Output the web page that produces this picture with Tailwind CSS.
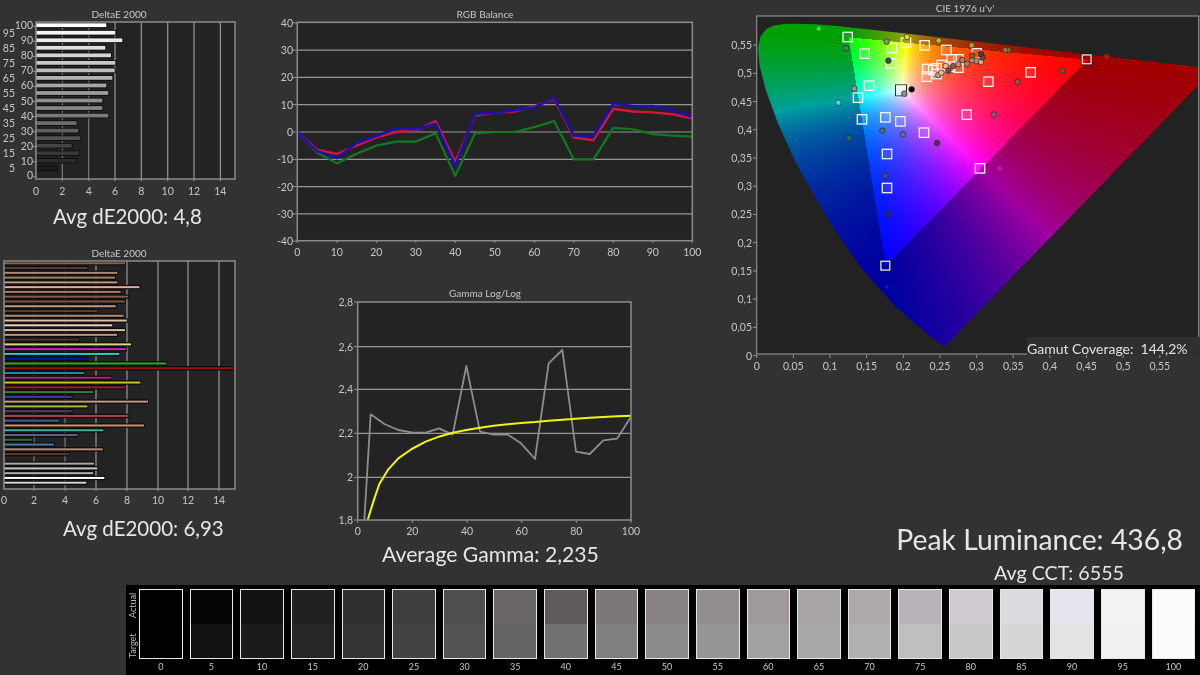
<!DOCTYPE html>
<html lang="en">
<head>
<meta charset="UTF-8">
<title>Calibration report</title>
<script src="https://cdn.jsdelivr.net/npm/@tailwindcss/browser@4"></script>
</head>
<body class="bg-[#323232] font-['Lato',sans-serif] w-[1200px] h-[675px] overflow-hidden flex flex-col text-[#e6e6e6]">

  <div class="flex h-[585px] blur-[0.4px]">
    <!-- left column: deltaE bars -->
    <div class="w-[275px] flex flex-col">
      <svg id="grey" class="block" width="275" height="204" viewBox="0 0 275 204"></svg>
      <p class="pl-[53px] h-[24px] leading-[24px] text-[20.5px] whitespace-nowrap">Avg dE2000: 4,8</p>
      <svg id="colors" class="block mt-[17px]" width="275" height="265" viewBox="0 245 275 265"></svg>
      <p class="pl-[63px] h-[36px] leading-[36px] text-[20.5px] whitespace-nowrap">Avg dE2000: 6,93</p>
    </div>

    <!-- middle column: rgb balance and gamma -->
    <div class="w-[445px] flex flex-col">
      <svg id="rgb" class="block" width="445" height="262" viewBox="275 0 445 262"></svg>
      <svg id="gamma" class="block mt-[22px]" width="445" height="257" viewBox="275 284 445 257"></svg>
      <p class="pl-[107px] h-[26px] leading-[26px] text-[21.2px] whitespace-nowrap">Average Gamma: 2,235</p>
    </div>

    <!-- right column: cie chart and peak figures -->
    <div class="w-[480px] flex flex-col">
      <div class="relative h-[372px]">
        <canvas id="gamut" class="absolute left-[37px] top-[16px]" width="441" height="338"></canvas>
        <svg id="cie" class="absolute left-0 top-0" width="480" height="372" viewBox="720 0 480 372"></svg>
      </div>
      <div class="mt-auto flex flex-col items-end">
        <p class="pr-[17px] h-[40px] leading-[40px] text-[28.3px] whitespace-nowrap">Peak Luminance: 436,8</p>
        <p class="pr-[76px] mt-[2px] h-[24px] leading-[24px] text-[19.7px] whitespace-nowrap">Avg CCT: 6555</p>
      </div>
    </div>
  </div>

  <!-- grayscale strip -->
  <div class="ml-[126px] h-[90px] bg-black flex pt-[4px] pr-[5px] blur-[0.4px]">
    <div class="w-[13px] h-[73px] flex flex-col items-center justify-between text-[9px] leading-[13px] text-[#bbbbbb]">
      <span class="[writing-mode:vertical-rl] rotate-180 h-[32px] text-center">Actual</span>
      <span class="[writing-mode:vertical-rl] rotate-180 h-[32px] text-center">Target</span>
    </div>
    <div id="swatches" class="flex-1 flex gap-[7px]"></div>
  </div>

<script>
  const GRID = '#969696', FRAME = '#8c8c8c', LABEL = '#c6c6c6', PLOT = '#232323';

  function rect(x, y, w, h, fill, extra = '') {
    return `<rect x="${x}" y="${y}" width="${w}" height="${h}" fill="${fill}" ${extra}/>`;
  }
  function line(x1, y1, x2, y2, color = GRID, width = 1.2) {
    return `<line x1="${x1}" y1="${y1}" x2="${x2}" y2="${y2}" stroke="${color}" stroke-width="${width}"/>`;
  }
  function text(x, y, str, anchor = 'middle', size = 10.5, color = LABEL) {
    return `<text x="${x}" y="${y}" text-anchor="${anchor}" dominant-baseline="central" font-size="${size}" fill="${color}">${str}</text>`;
  }
  function poly(points, color, width) {
    const p = points.map(a => a.join(',')).join(' ');
    return `<polyline points="${p}" fill="none" stroke="${color}" stroke-width="${width}" stroke-linejoin="round"/>`;
  }
  function frame(x1, y1, x2, y2) {
    return `<rect x="${x1}" y="${y1}" width="${x2 - x1}" height="${y2 - y1}" fill="none" stroke="${FRAME}" stroke-width="1.5"/>`;
  }

  // grayscale deltaE
  (function () {
    const ends = [322,349,370,319,336,349,347,340,322,328,310,310,328,233,238,244,218,241,233,173];
    let s = text(119, 14, 'DeltaE 2000', 'middle', 10);
    s += rect(36, 22, 199, 157, PLOT);
    for (let v = 2; v <= 14; v += 2) {
      const x = 36 + v * 13.17;
      s += line(x, 22, x, 181, v <= 4 ? '#7a7a7a' : GRID);
      s += text(x, 191, v);
    }
    s += text(36, 191, 0);
    ends.forEach((e, i) => {
      const y = 25.2 + i * 7.53, g = Math.round(255 * Math.pow(1 - i / 20.5, 0.85));
      s += rect(36, y - 2.8, e / 3 - 36, 5.6, '#0c0c0c');
      s += rect(36, y - 1.9, e / 3 - 37, 3.8, `rgb(${g},${g},${g})`);
    });
    for (let i = 0; i <= 20; i++) {
      const y = 25.2 + i * 7.53, v = 100 - i * 5;
      s += text(i % 2 ? 15 : 33, y + (i === 20 ? -0.5 : 0), v, 'end');
      if (i % 2 === 0) s += line(33, y + 1, 36, y + 1, GRID, 1);
    }
    s += frame(36, 22, 235, 179);
    document.getElementById('grey').innerHTML = s;
  })();

  // colour deltaE
  (function () {
    const bars = [
      [378,'#8a6250'],[265,'#5a3e30'],[355,'#b08a70'],[348,'#a58068'],[355,'#b89880'],[421,'#e8a898'],[365,'#a87868'],[387,'#8a5a48'],
      [378,'#7a5544'],[350,'#c09a85'],[295,'#5a4030'],[374,'#b88a68'],[383,'#e0c0a8'],[340,'#e8d4c4'],[378,'#dcb8a0'],[354,'#bb9580'],
      [240,'#4a3a30'],[396,'#d8d88a'],[381,'#d020d0'],[361,'#30c8c8'],[265,'#1018a0'],[502,'#20b020'],[704,'#a01010'],[255,'#1090a8'],
      [337,'#a02a70'],[424,'#c8c820'],[378,'#902030'],[283,'#3a7a3a'],[218,'#3a40a0'],[447,'#c89878'],[265,'#a0c040'],[218,'#5a3a6a'],
      [388,'#b04050'],[180,'#4a5a9a'],[435,'#d89060'],[313,'#40b098'],[235,'#606088'],[100,'#3a6a28'],[165,'#4a78a8'],[311,'#b88a78'],
      [210,'#5a3a30'],null,[285,'#a8a8a8'],[295,'#c8c8c8'],[282,'#b0b0b0'],[316,'#ffffff'],[262,'#d0d0d0']
    ];
    const tick = [4, 34, 65, 96, 127, 158, 188, 219];
    let s = text(119, 253, 'DeltaE 2000', 'middle', 10);
    s += rect(4, 261, 231, 228, PLOT);
    tick.forEach((x, i) => {
      if (i) s += line(x, 261, x, 491, i < 3 ? '#7a7a7a' : GRID);
      s += text(x, 500, i * 2);
    });
    bars.forEach((b, i) => {
      if (!b) return;
      const y = 263.3 + i * 4.77;
      s += rect(4, y - 2.2, b[0] / 3 - 4, 4.4, '#0c0c0c');
      s += rect(4, y - 1, b[0] / 3 - 5, 2, b[1]);
    });
    s += frame(4, 261, 235, 489);
    document.getElementById('colors').innerHTML = s;
  })();

  // rgb balance
  (function () {
    const red = [0,-6.5,-8,-5,-2,0,0.5,4,-11,6,7,7.5,9.5,12,-2,-3,8.5,7.5,7.2,6.5,5];
    const green = [0,-7.5,-11.5,-8,-5,-3.5,-3.5,-0.5,-16,-0.5,0,0,1.8,4,-10,-10,1.5,1,-0.8,-1.3,-1.7];
    const blue = [0,-7,-9.5,-4,-1.5,1.3,1,3,-12.5,6.7,7,8,9,12.5,-1.3,-1.5,10.5,9.5,9.5,8,5.5];
    const X = i => 297.3 + i * 19.75, Y = v => 132 - v * 2.73;
    const pts = a => a.map((v, i) => [X(i), Y(v)]);
    let s = text(485, 14, 'RGB Balance', 'middle', 10);
    s += rect(297.3, 22.3, 395, 218.4, PLOT);
    for (let v = 40; v >= -40; v -= 10) {
      if (Math.abs(v) < 40) s += line(297.3, Y(v), 692.3, Y(v));
      s += text(293, Y(v), v, 'end');
      s += line(293, Y(v), 297, Y(v), GRID, 1);
    }
    for (let i = 0; i <= 10; i++) {
      s += text(X(i * 2), 252, i * 10);
      s += line(X(i * 2), 240, X(i * 2), 243, GRID, 1);
    }
    s += poly(pts(green), '#12791f', 2.2);
    s += poly(pts(red), '#d3173a', 2.4);
    s += poly(pts(blue), '#1c10ae', 2.6);
    s += frame(297.3, 22.3, 692.3, 240.7);
    document.getElementById('rgb').innerHTML = s;
  })();

  // gamma log/log
  (function () {
    const conv = a => a.map(p => [p[0] / 3 + 330, p[1] / 3 + 280]);
    const grey = [[103,720],[122,403],[163,432],[205,450],[245,457],[287,458],[327,445],[368,464],[409,258],[450,455],[491,464],[532,463],[573,490],[615,537],[656,250],[697,210],[738,515],[779,522],[820,481],[861,476],[903,410]];
    const yellow = [[113,720],[130,665],[148,612],[175,568],[205,535],[245,507],[287,485],[327,470],[368,458],[409,450],[450,443],[491,437],[532,433],[573,429],[615,426],[656,422],[697,419],[738,416],[779,413],[820,411],[861,409],[903,407]];
    let s = text(485, 293, 'Gamma Log/Log', 'middle', 10);
    s += rect(357.7, 302, 273.3, 218, PLOT);
    [[302,'2,8'],[346.7,'2,6'],[389.3,'2,4'],[433.3,'2,2'],[477.3,'2'],[520,'1,8']].forEach(g => {
      if (g[0] > 302 && g[0] < 520) s += line(357.7, g[0], 631, g[0]);
      s += text(353, g[0], g[1], 'end');
      s += line(354, g[0], 358, g[0], GRID, 1);
    });
    for (let i = 0; i <= 5; i++) {
      const x = 357.7 + i * 54.66;
      s += text(x, 531, i * 20);
      s += line(x, 520, x, 523, GRID, 1);
    }
    s += poly(conv(grey), '#8e8e8e', 1.8);
    s += poly(conv(yellow), '#f4f40c', 2);
    s += frame(357.7, 302, 631, 520);
    document.getElementById('gamma').innerHTML = s;
  })();

  // cie 1976 chart
  const LOCUS = [[.1741,.005],[.1714,.0051],[.1644,.0109],[.1566,.0177],[.144,.0297],[.1241,.0578],[.1096,.0868],[.0913,.1327],[.0687,.2007],[.0454,.295],[.0235,.4127],[.0082,.5384],[.0039,.6548],[.0139,.7502],[.0389,.812],[.0743,.8338],[.1142,.8262],[.1547,.8059],[.2296,.7543],[.3016,.6923],[.3731,.6245],[.4441,.5547],[.5125,.4866],[.5752,.4242],[.627,.3725],[.6915,.3083],[.719,.2809],[.7347,.2653]]
    .map(p => {
      const d = -2 * p[0] + 12 * p[1] + 3;
      return [4 * p[0] / d, 9 * p[1] / d];
    });

  (function () {
    const cv = document.getElementById('gamut'), ctx = cv.getContext('2d');
    const W = cv.width, H = cv.height;
    const off = document.createElement('canvas');
    off.width = W; off.height = H;
    const octx = off.getContext('2d'), img = octx.createImageData(W, H);
    // canvas px <-> u'v'
    const PX = 733.3, PY = 564.7, BOTTOM = 339;
    for (let y = 0; y < H; y++) {
      for (let x = 0; x < W; x++) {
        const u = (x + 0.5) / PX, v = (BOTTOM - y - 0.5) / PY;
        const i = (y * W + x) * 4;
        if (v <= 0.001) continue;
        const X = 9 * u / (4 * v), Z = (12 - 3 * u - 20 * v) / (4 * v);
        let r = 3.2406 * X - 1.5372 - 0.4986 * Z;
        let g = -0.9689 * X + 1.8758 + 0.0415 * Z;
        let b = 0.0557 * X - 0.204 + 1.057 * Z;
        const inside = r >= 0 && g >= 0 && b >= 0;
        r = Math.max(r, 0); g = Math.max(g, 0); b = Math.max(b, 0);
        const m = Math.max(r, g, b) || 1, k = inside ? 255 : 160, e = 1.1;
        img.data[i] = k * Math.pow(r / m, e);
        img.data[i + 1] = k * Math.pow(g / m, e);
        img.data[i + 2] = k * Math.pow(b / m, e);
        img.data[i + 3] = 255;
      }
    }
    octx.putImageData(img, 0, 0);
    ctx.fillStyle = '#222222';
    ctx.fillRect(0, 0, W, H);
    ctx.beginPath();
    LOCUS.forEach((p, i) => {
      const x = p[0] * PX, y = BOTTOM - p[1] * PY;
      i ? ctx.lineTo(x, y) : ctx.moveTo(x, y);
    });
    ctx.closePath();
    ctx.clip();
    ctx.drawImage(off, 0, 0);
  })();

  (function () {
    const zx = z => 720 + z / 3, zy = z => z / 3;
    const labels = ['0','0,05','0,1','0,15','0,2','0,25','0,3','0,35','0,4','0,45','0,5','0,55'];
    let s = text(965, 8, "CIE 1976 u'v'", 'middle', 10);

    const squares = [[383,111],[434,161],[516,144],[558,128],[614,136],[679,150],[513,190],[447,257],[414,293],[426,358],[496,352],[541,364],[612,398],[740,344],[805,245],[932,217],[501,462],[501,564],[780,505],[622,207],[620,230],[650,205],[665,195],[695,178],[715,178],[715,203],[690,200],[770,160],[650,222],[640,210]];
    squares.forEach(p => {
      s += `<rect x="${zx(p[0]) - 4.7}" y="${zy(p[1]) - 4.7}" width="9.4" height="9.4" fill="#ffffff" fill-opacity="0.08" stroke="#f4f4f4" stroke-width="1.3"/>`;
    });
    // dark edged squares: red, blue and white primaries
    [[1100,178],[496,797],[543,271]].forEach(p => {
      s += `<rect x="${zx(p[0]) - 5.4}" y="${zy(p[1]) - 5.4}" width="10.8" height="10.8" fill="none" stroke="#1a1a1a" stroke-width="1"/>`;
      s += `<rect x="${zx(p[0]) - 4.4}" y="${zy(p[1]) - 4.4}" width="8.8" height="8.8" fill="none" stroke="#f4f4f4" stroke-width="1.2"/>`;
    });

    const dots = [[378,145,'#4a8a50'],[500,125,'#8a9a60'],[561,111,'#e8d820'],[656,122,'#d8b030'],[755,136,'#c09040'],[864,150,'#a87040'],[856,150,'#a06840'],[1160,170,'#d01010'],[505,182,'#3a5a20'],[1027,212,'#a04030'],[893,246,'#a04a40'],[403,266,'#8aa090'],[355,308,'#30e0e0'],[575,268,'#000000'],[553,281,'#909090'],[822,344,'#a04a80'],[487,392,'#4a6a8a'],[549,403,'#6a6a9a'],[651,429,'#503060'],[387,414,'#207070'],[496,527,'#3a4a8a'],[505,642,'#202a70'],[655,225,'#d0a080'],[664,218,'#e8b898'],[677,198,'#e8b898'],[685,212,'#705040'],[700,198,'#806040'],[715,193,'#c09070'],[727,180,'#b08060'],[741,192,'#b08060'],[757,180,'#c09070'],[770,183,'#c08a60'],[783,186,'#e0a880'],[757,167,'#8a5a3a'],[788,172,'#704a30'],[783,162,'#5a3a2a']];
    dots.forEach(d => {
      s += `<circle cx="${zx(d[0])}" cy="${zy(d[1])}" r="2.8" fill="${d[2]}" stroke="#2a2a2a" stroke-opacity="0.8" stroke-width="0.9"/>`;
    });
    s += `<circle cx="${zx(296)}" cy="${zy(86)}" r="2.2" fill="#35e035"/>`;
    s += `<circle cx="${zx(839)}" cy="${zy(505)}" r="2.2" fill="#c814b8"/>`;
    s += `<circle cx="${zx(501)}" cy="${zy(861)}" r="1.6" fill="#1428c8"/>`;

    s += `<rect x="756.7" y="16" width="442" height="338" fill="none" stroke="${FRAME}" stroke-width="1.2"/>`;
    // gamut label sits on its own patch over the corner
    s += rect(1027, 337, 173, 18.5, '#2f2f2f');
    s += `<text x="1027" y="348" dominant-baseline="central" font-size="14" fill="#e2e2e2" xml:space="preserve">Gamut Coverage:  144,2%</text>`;

    labels.forEach((l, i) => {
      const x = 756.7 + i * 36.65, y = 355.6 - i * 28.23;
      s += text(x, 366, l);
      s += line(x, 355, x, 358, GRID, 1);
      s += text(752, y, l, 'end');
      s += line(753, y, 757, y, GRID, 1);
    });
    document.getElementById('cie').innerHTML = s;
  })();

  // grayscale swatches: actual over target
  const swatches = [
    [0,'#000000','#000000'],[5,'#050505','#111111'],[10,'#121212','#1b1b1b'],[15,'#212123','#262626'],[20,'#303033','#343434'],
    [25,'#3f3f42','#434343'],[30,'#4f4f51','#535353'],[35,'#686468','#646464'],[40,'#5d595d','#727272'],[45,'#7a767a','#7f7f7f'],
    [50,'#878285','#8b8b8b'],[55,'#918d91','#969696'],[60,'#9d999d','#a1a1a1'],[65,'#aaa5a9','#a9a9a9'],[70,'#aca8ac','#b1b1b1'],
    [75,'#b8b4b9','#bfbfbf'],[80,'#cfcbd0','#c9c9c9'],[85,'#dddbdf','#d6d6d6'],[90,'#e8e4ee','#e3e3e3'],[95,'#f5f2f6','#f0f0f0'],
    [100,'#fdfafd','#fbfbfb']
  ];
  document.getElementById('swatches').innerHTML = swatches.map(s => `
    <div class="flex-1 flex flex-col">
      <div class="h-[73px] border border-[#e8e8e8] flex flex-col">
        <div class="flex-1" style="background:${s[1]}"></div>
        <div class="flex-1" style="background:${s[2]}"></div>
      </div>
      <div class="text-center text-[9px] leading-[16px] text-[#c8c8c8]">${s[0]}</div>
    </div>`).join('');
</script>
</body>
</html>
